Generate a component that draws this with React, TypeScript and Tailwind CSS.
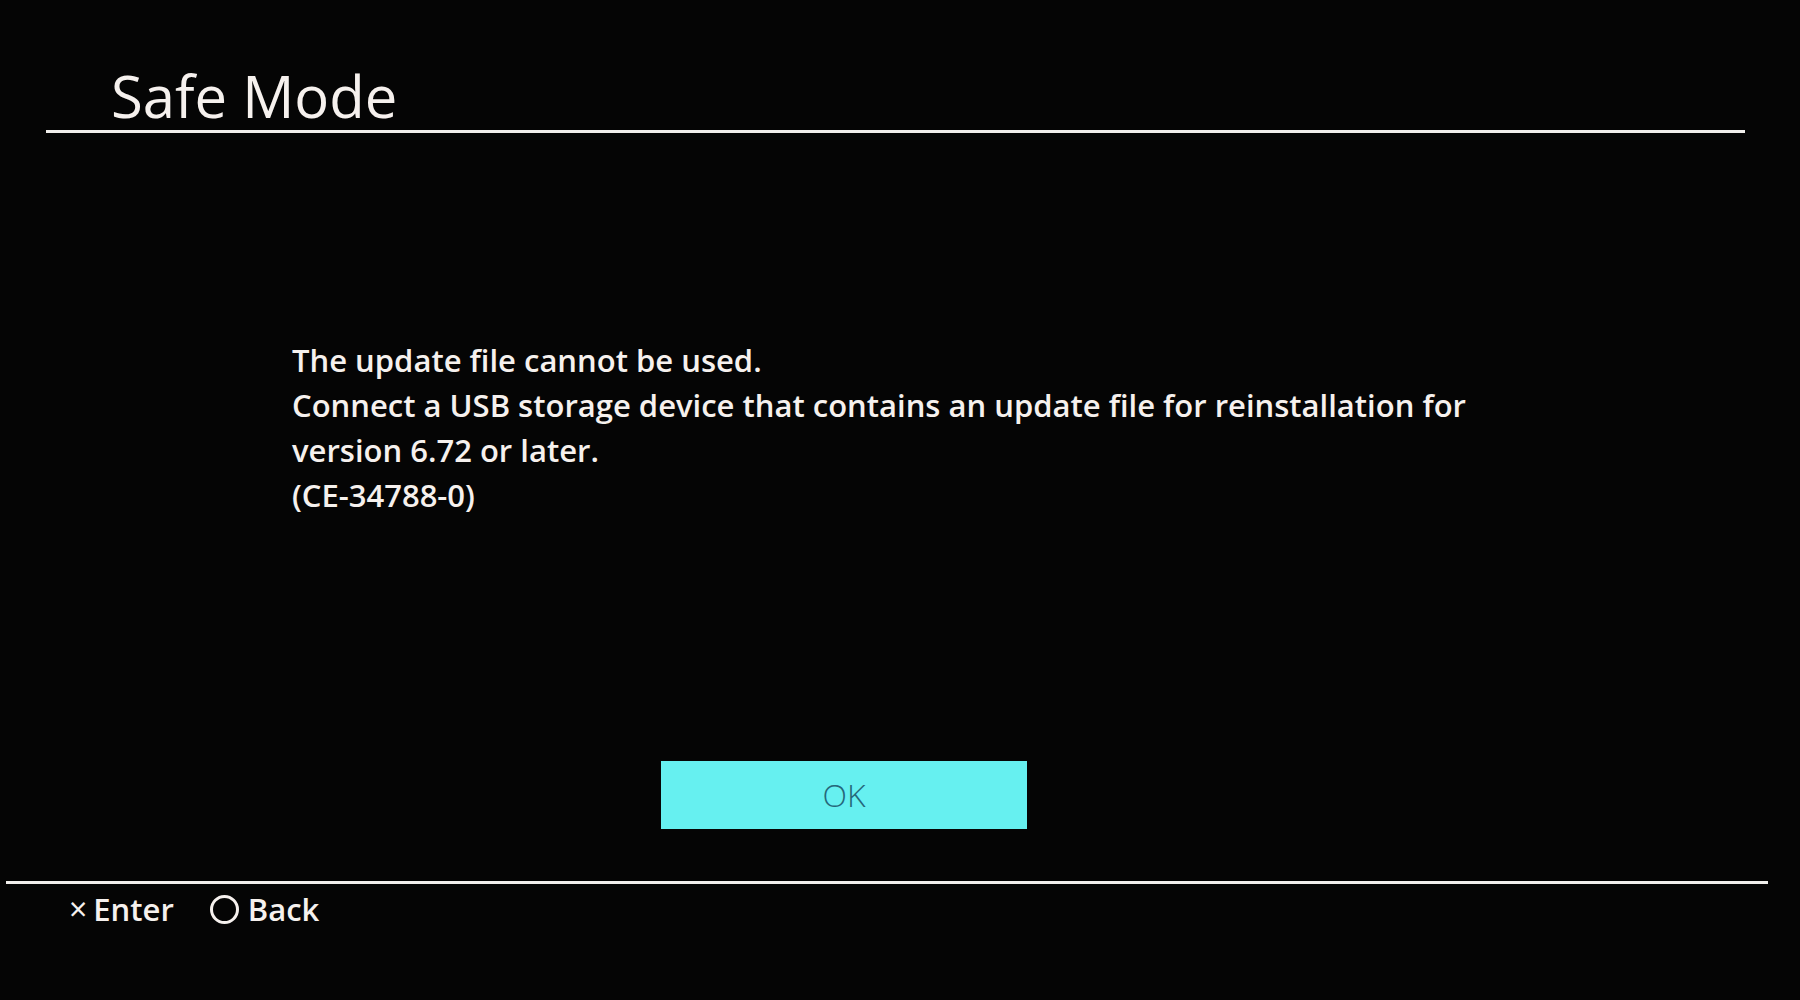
export default function App() {
  const lines = [
    "The update file cannot be used.",
    "Connect a USB storage device that contains an update file for reinstallation for",
    "version 6.72 or later.",
    "(CE-34788-0)",
  ];

  return (
    <div className="flex h-[1000px] w-[1800px] flex-col overflow-hidden bg-[#050505] font-['Open_Sans',sans-serif] text-[#f6f1ee]">
      {/* header */}
      <div className="pl-[111px] pt-[67px] text-[58px] leading-none">Safe Mode</div>
      <div className="ml-[46px] mt-[5px] h-[3px] w-[1699px] bg-[#f1efec]" />

      {/* message */}
      <div className="mt-[205px] pl-[292px] text-[31px] font-semibold leading-[45px]">
        {lines.map((line) => (
          <p key={line}>{line}</p>
        ))}
      </div>

      {/* button */}
      <div className="ml-[661px] mt-[243px] flex h-[68px] w-[366px] items-center justify-center bg-[#66f0f0] text-[32px] font-light text-[#25677a]">
        OK
      </div>

      <div className="ml-[6px] mt-[52px] h-[3px] w-[1762px] bg-[#f1efec]" />

      {/* footer */}
      <div className="mt-[7px] flex items-center gap-[36px] pl-[69px] text-[31px] font-semibold leading-[36px]">
        <div className="flex items-center gap-[6px]">
          <span className="text-[32px] font-normal">×</span>
          <span>Enter</span>
        </div>
        <div className="flex items-center gap-[9px]">
          <div className="h-[29px] w-[29px] rounded-full border-[3px] border-[#f6f1ee]" />
          <span>Back</span>
        </div>
      </div>
    </div>
  );
}
